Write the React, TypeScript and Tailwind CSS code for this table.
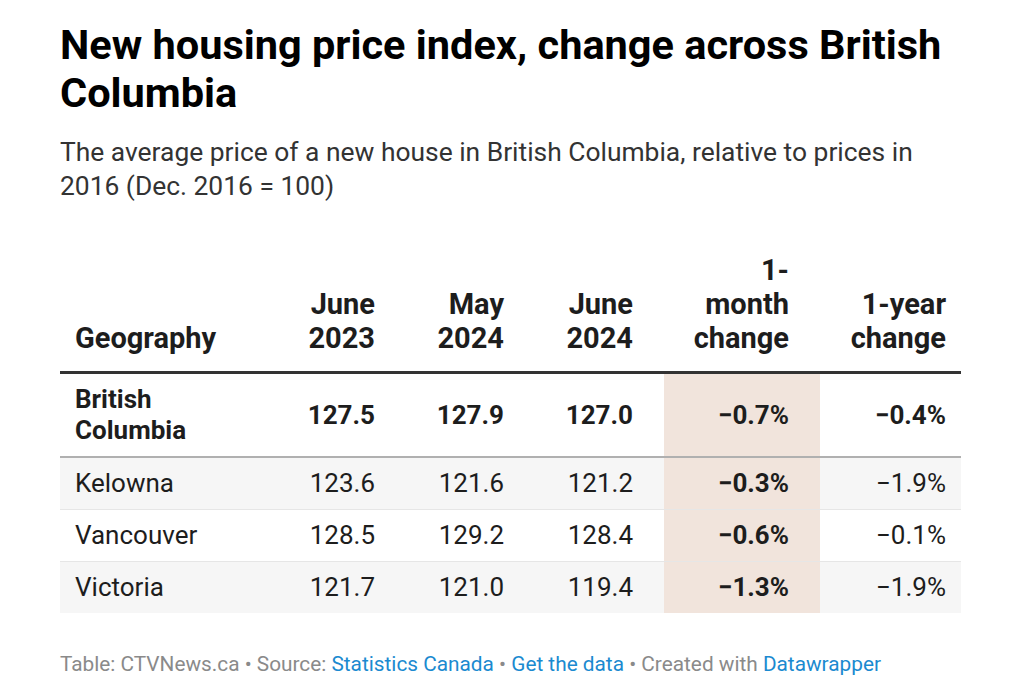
import React from "react";

type Row = {
  name: string;
  values: string[];
  month: string;
  year: string;
  bold?: boolean;
};

const rows: Row[] = [
  { name: "British Columbia", values: ["127.5", "127.9", "127.0"], month: "−0.7%", year: "−0.4%", bold: true },
  { name: "Kelowna", values: ["123.6", "121.6", "121.2"], month: "−0.3%", year: "−1.9%" },
  { name: "Vancouver", values: ["128.5", "129.2", "128.4"], month: "−0.6%", year: "−0.1%" },
  { name: "Victoria", values: ["121.7", "121.0", "119.4"], month: "−1.3%", year: "−1.9%" },
];

const cols = "grid grid-cols-[200px_130px_129px_145px_156px_141px]";

const App = () => {
  return (
    <div
      className="min-h-screen bg-white px-[60px] pt-[21px] text-[#1d1d1d]"
      style={{ fontFamily: "Roboto, 'Liberation Sans', sans-serif" }}
    >
      <h1 className="text-[41.5px] leading-[48px] font-bold text-black w-[904px]">
        New housing price index, change across British Columbia
      </h1>
      <p className="mt-[18px] text-[26.4px] leading-[34px] text-[#333] w-[880px]">
        The average price of a new house in British Columbia, relative to prices in 2016 (Dec. 2016 = 100)
      </p>

      <div className="mt-[50px] w-[901px]">
        <div className={`${cols} items-end border-b-[3px] border-[#333] pb-[16px] text-[29px] leading-[34px] font-bold`}>
          <div className="pl-[15px]">Geography</div>
          <div className="text-right pr-[15px]">June<br />2023</div>
          <div className="text-right pr-[15px]">May<br />2024</div>
          <div className="text-right pr-[31px]">June<br />2024</div>
          <div className="text-right pr-[31px]">1-<br />month<br />change</div>
          <div className="text-right pr-[15px]">1-year<br />change</div>
        </div>

        {rows.map((row, i) => (
          <div
            key={row.name}
            className={`${cols} text-[26px] leading-[31px] ${
              i === 0 ? "border-b-2 border-[#b0b0b0]" : i < rows.length - 1 ? "border-b border-[#e6e6e6]" : ""
            } ${i % 2 === 1 ? "bg-[#f6f6f6]" : "bg-white"} ${row.bold ? "font-bold" : ""}`}
          >
            <div className="pl-[15px] py-[10px] pr-[50px]">{row.name}</div>
            <div className="flex items-center justify-end pr-[15px] tabular-nums">{row.values[0]}</div>
            <div className="flex items-center justify-end pr-[15px] tabular-nums">{row.values[1]}</div>
            <div className="flex items-center justify-end pr-[31px] tabular-nums">{row.values[2]}</div>
            <div className="flex items-center justify-end pr-[31px] bg-[#f1e4dc] font-bold tabular-nums">{row.month}</div>
            <div className="flex items-center justify-end pr-[15px] tabular-nums">{row.year}</div>
          </div>
        ))}
      </div>

      <p className="mt-[39px] text-[20.8px] leading-[24px] text-[#8a8a8a]">
        Table: CTVNews.ca • Source: <a className="text-[#1b8ad0]">Statistics Canada</a> •{" "}
        <a className="text-[#1b8ad0]">Get the data</a> • Created with{" "}
        <a className="text-[#1b8ad0]">Datawrapper</a>
      </p>
    </div>
  );
};

export default App;
